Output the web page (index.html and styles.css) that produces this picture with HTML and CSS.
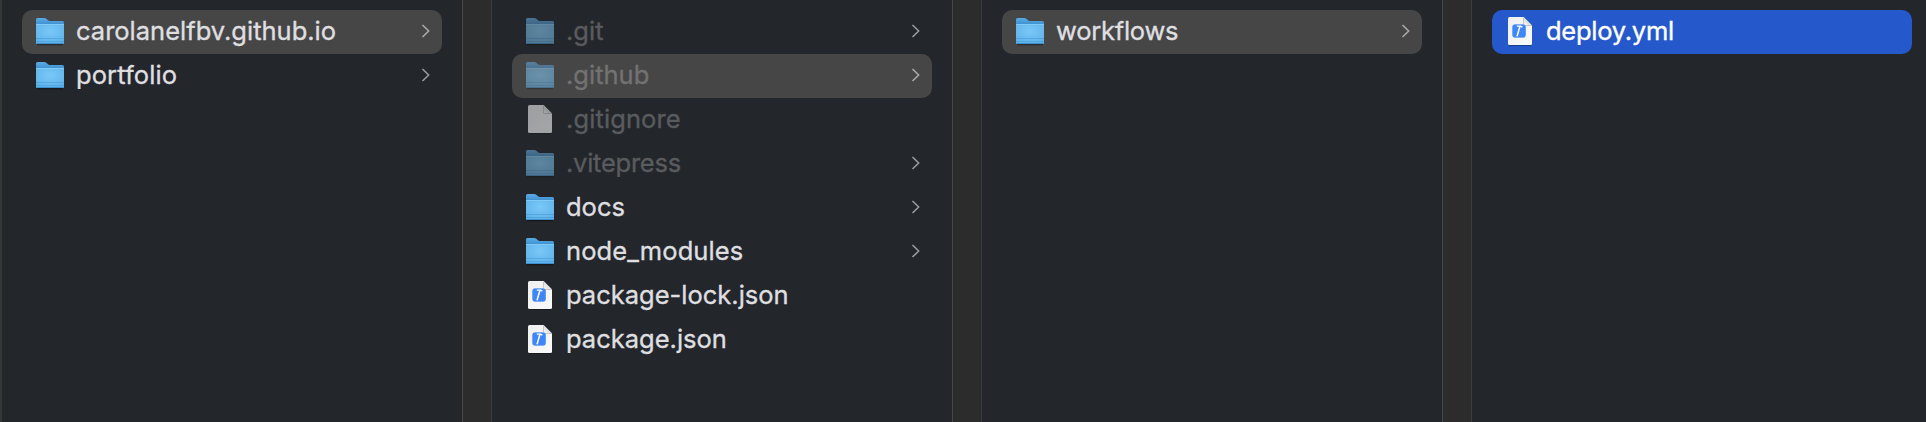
FILE: index.html
```
<!DOCTYPE html>
<html lang="en">
<head>
<meta charset="utf-8">
<title>Finder columns</title>
<link rel="stylesheet" href="styles.css">
</head>
<body>
<svg class="defs" width="0" height="0" aria-hidden="true">
  <defs>
    <linearGradient id="folder-back" x1="0" y1="0" x2="0" y2="1"><stop offset="0" stop-color="#5aabe4"/><stop offset="0.25" stop-color="#3f90d0"/><stop offset="1" stop-color="#3f90d0"/></linearGradient>
    <radialGradient id="folder-front" cx="0.5" cy="0.35" r="0.75"><stop offset="0" stop-color="#7ac8f8"/><stop offset="1" stop-color="#5cb0e8"/></radialGradient>
    <linearGradient id="paper" x1="0" y1="0" x2="1" y2="1"><stop offset="0" stop-color="#f0f0f0"/><stop offset="1" stop-color="#fafafa"/></linearGradient>
    <linearGradient id="fold" x1="0" y1="1" x2="1" y2="0"><stop offset="0" stop-color="#ffffff"/><stop offset="0.5" stop-color="#dcdcdc"/></linearGradient>
    <symbol id="folder" viewBox="0 0 28 28">
      <path d="M1 26.7h26" stroke="#000" stroke-opacity=".35" stroke-width="1.4"/>
      <path d="M0 1.5Q0 0 1.5 0H8.300q1 0 1.700.6L12 2.300q.8.700 1.800.700H26.500Q28 3 28 4.500V24.500Q28 26 26.500 26h-25Q0 26 0 24.500z" fill="url(#folder-back)"/>
      <path d="M0 7Q0 6 1 6H27Q28 6 28 7V24.500Q28 26 26.500 26h-25Q0 26 0 24.500z" fill="url(#folder-front)"/>
      <path d="M0 6.500H28" stroke="#8bd2fb" stroke-opacity=".7"/>
      <path d="M0 20.500H28M0 23.500H28" stroke="#3f93d0" stroke-opacity=".5"/>
      <path d="M1 25.500H27" stroke="#3c8fcf"/>
    </symbol>
    <symbol id="page" viewBox="0 0 24 30">
      <path d="M1 28.400h22" stroke="#000" stroke-opacity=".3" stroke-width="1.200"/>
      <path d="M1.500 0H15.500L24 8.500V26.500Q24 28 22.500 28h-21Q0 28 0 26.500v-25Q0 0 1.500 0z" fill="url(#paper)"/>
      <path d="M15.500 0V7.500q0 1 1 1H24z" fill="url(#fold)"/>
      <path d="M15.500 1V7.500q0 1 1 1H23.500" fill="none" stroke="#8e8e8e" stroke-opacity=".55" stroke-width=".8"/>
    </symbol>
    <symbol id="code" viewBox="0 0 24 30">
      <use href="#page" width="24" height="30"/>
      <rect x="4.300" y="7.200" width="13.500" height="13.500" rx="3" fill="#3f86fb"/>
      <path d="M6 7.500H16M6 20.400H16" stroke="#86b5fc" stroke-width=".7"/>
      <path d="M11.900 9.500L9.200 18.800" stroke="#fff" stroke-width="1.500" stroke-linecap="round"/>
      <path d="M8.800 9.100H12.500L14.400 10.100" fill="none" stroke="#fff" stroke-width="1.300"/>
    </symbol>
    <symbol id="chevron" viewBox="0 0 8 14"><path d="M1 1.500L6.700 7L1 12.500" fill="none" stroke="currentColor" stroke-width="1.700" stroke-linecap="round" stroke-linejoin="round"/></symbol>
  </defs>
</svg>
<main class="browser">
  <section class="column">
    <div class="row selected"><svg class="icon folder"><use href="#folder"/></svg><span class="name">carolanelfbv.github.io</span><svg class="chevron"><use href="#chevron"/></svg></div>
    <div class="row"><svg class="icon folder"><use href="#folder"/></svg><span class="name wide">portfolio</span><svg class="chevron"><use href="#chevron"/></svg></div>
  </section>
  <div class="divider"></div>
  <section class="column">
    <div class="row hidden"><svg class="icon folder"><use href="#folder"/></svg><span class="name">.git</span><svg class="chevron"><use href="#chevron"/></svg></div>
    <div class="row hidden selected"><svg class="icon folder"><use href="#folder"/></svg><span class="name">.github</span><svg class="chevron"><use href="#chevron"/></svg></div>
    <div class="row hidden"><svg class="icon page"><use href="#page"/></svg><span class="name wide">.gitignore</span></div>
    <div class="row hidden"><svg class="icon folder"><use href="#folder"/></svg><span class="name tight">.vitepress</span><svg class="chevron"><use href="#chevron"/></svg></div>
    <div class="row"><svg class="icon folder"><use href="#folder"/></svg><span class="name">docs</span><svg class="chevron"><use href="#chevron"/></svg></div>
    <div class="row"><svg class="icon folder"><use href="#folder"/></svg><span class="name wide">node_modules</span><svg class="chevron"><use href="#chevron"/></svg></div>
    <div class="row"><svg class="icon page"><use href="#code"/></svg><span class="name">package-lock.json</span></div>
    <div class="row"><svg class="icon page"><use href="#code"/></svg><span class="name">package.json</span></div>
  </section>
  <div class="divider"></div>
  <section class="column">
    <div class="row selected"><svg class="icon folder"><use href="#folder"/></svg><span class="name tight">workflows</span><svg class="chevron"><use href="#chevron"/></svg></div>
  </section>
  <div class="divider"></div>
  <section class="column">
    <div class="row active"><svg class="icon page"><use href="#code"/></svg><span class="name tight">deploy.yml</span></div>
  </section>
</main>
</body>
</html>
```

FILE: styles.css
```
body { margin: 0; background: #23262a; overflow: hidden; }
.defs { display: block; }
.browser {
  display: flex;
  box-sizing: border-box;
  width: 1926px;
  height: 422px;
  border-left: 2px solid #353638;
  font: 400 25.5px/42px Inter, "Liberation Sans", sans-serif;
  color: #dfdfe0;
}
.column { flex: 0 0 420px; padding: 10px 20px; }
.column:last-child { padding-right: 0; }
.divider {
  flex: 0 0 30px;
  box-sizing: border-box;
  background: #2c2c2c;
  border-left: 1px solid #48484a;
  border-right: 1px solid #3a3b3d;
}
.row {
  display: flex;
  align-items: flex-start;
  box-sizing: border-box;
  height: 44px;
  padding: 0 12px 0 14px;
  border-radius: 10px;
}
.selected { background: #464646; }
.active { background: #2558cb; color: #fff; }
.icon { flex: none; }
.folder { width: 28px; height: 28px; margin: 8px 12px 0 0; }
.page { width: 24px; height: 30px; margin: 7px 14px 0 2px; }
.name { flex: 1; white-space: nowrap; height: 44px; -webkit-text-stroke: .35px currentColor; }
.tight { letter-spacing: -.25px; }
.wide { letter-spacing: .1px; }
.hidden .icon { opacity: .6; filter: saturate(.8); }
.hidden .name { color: #595b5e; }
.hidden.selected .name { color: #727272; }
.chevron { flex: none; width: 8px; height: 14px; margin-top: 14px; color: #98999b; }
.selected .chevron { color: #a8a8a8; }
```
